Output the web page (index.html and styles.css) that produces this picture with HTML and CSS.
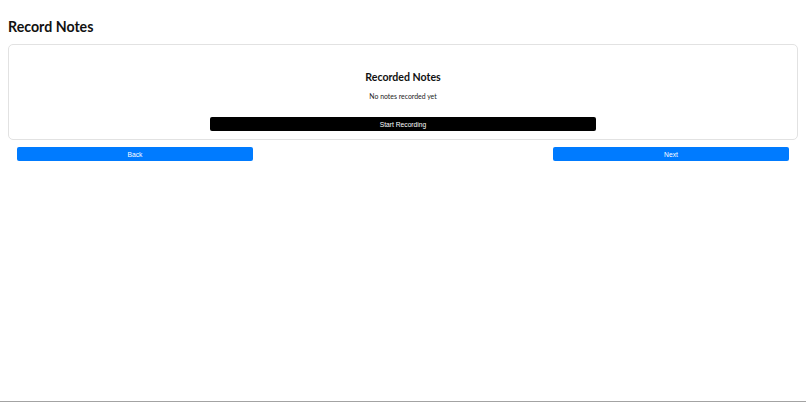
FILE: index.html
```html
<!DOCTYPE html>
<html lang="en">
<head>
<meta charset="utf-8">
<title>Record Notes</title>
<link rel="stylesheet" href="styles.css">
</head>
<body>
<div class="page">
  <h1 class="title">Record Notes</h1>
  <section class="card">
    <h2 class="card-title">Recorded Notes</h2>
    <p class="empty">No notes recorded yet</p>
    <button class="btn btn-record" type="button">Start Recording</button>
  </section>
  <div class="nav">
    <button class="btn btn-nav" type="button">Back</button>
    <button class="btn btn-nav" type="button">Next</button>
  </div>
</div>
</body>
</html>
```
FILE: styles.css
```css
html, body {
  margin: 0;
  padding: 0;
}
body {
  min-height: calc(100vh - 1px);
  border-bottom: 1px solid #a3a3a3;
  background: #fff;
  font-family: Lato, "Open Sans", sans-serif;
  color: #111;
}
.page {
  padding: 0 8px;
}
.title {
  margin: 0;
  padding-top: 17px;
  height: 27px;
  line-height: 20px;
  font-size: 14.2px;
  font-weight: 700;
}
.card {
  border: 1px solid #e2e2e2;
  border-radius: 5px;
  padding: 25px 10px 8px;
  display: flex;
  flex-direction: column;
  align-items: center;
}
.card-title {
  margin: 0;
  font-size: 10.6px;
  line-height: 14px;
  font-weight: 700;
}
.empty {
  margin: 7px 0 0;
  font-size: 6.9px;
  line-height: 10px;
  color: #222;
}
.btn {
  border: none;
  font-family: "Liberation Sans", Arial, sans-serif;
  font-size: 6.7px;
  color: #fff;
  padding: 0;
  cursor: pointer;
}
.btn-record {
  margin-top: 16px;
  width: 386px;
  height: 14px;
  background: #000;
  border-radius: 2px;
}
.nav {
  display: flex;
  justify-content: space-between;
  padding: 7px 9px 0 9px;
}
.btn-nav {
  width: 236px;
  height: 14px;
  background: #007bff;
  border-radius: 2px;
}
```
